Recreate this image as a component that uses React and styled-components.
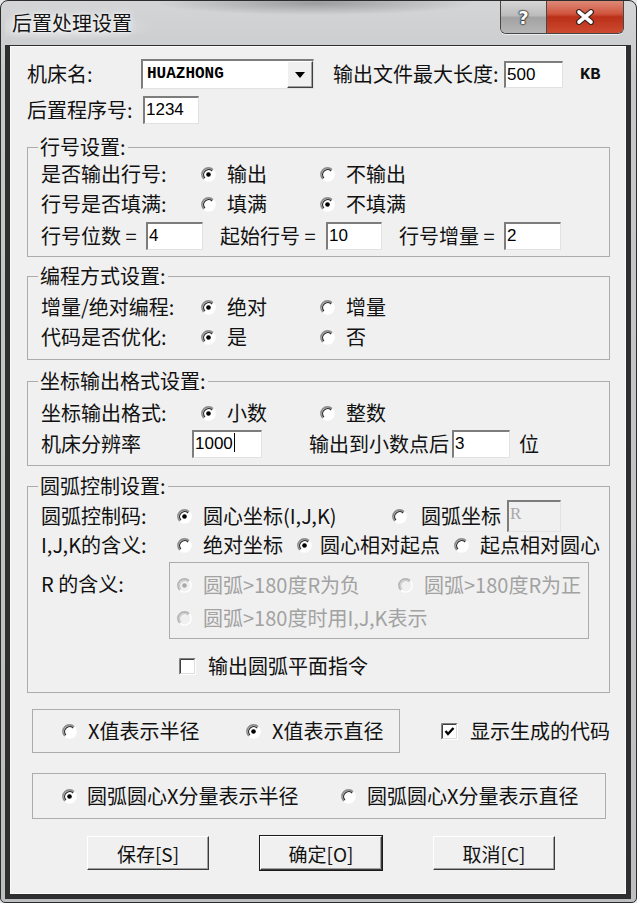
import React from 'react';
import styled, { createGlobalStyle } from 'styled-components';

const font = `"Noto Sans CJK SC", "Noto Sans CJK TC", sans-serif`;

const GlobalStyle = createGlobalStyle`
  html, body { margin: 0; padding: 0; background: #e6e7e8; }
  body { font-family: ${font}; }
`;

const Window = styled.div`
  box-sizing: border-box;
  width: 637px;
  height: 903px;
  border: 1px solid #2c2c2c;
  border-radius: 8px 8px 5px 5px;
  background: linear-gradient(#d3d5d7, #c6c8ca 80px, #bcbec0);
  padding: 0 5px 3px 4px;
  display: flex;
  flex-direction: column;
  overflow: hidden;
  font-family: ${font};
  color: #111;
`;

const TitleBar = styled.div`
  height: 44px;
  flex-shrink: 0;
  display: flex;
  align-items: flex-start;
  background:
    radial-gradient(ellipse 160px 12px at 310px 2px, rgba(70, 70, 70, 0.4), transparent),
    radial-gradient(ellipse 90px 14px at 60px 26px, rgba(255, 255, 255, 0.5), transparent);
`;

const TitleText = styled.div`
  font-size: 20px;
  line-height: 44px;
  padding-left: 7px;
  color: #151515;
  text-shadow: 0 0 8px rgba(255, 255, 255, 0.95), 0 0 3px rgba(255, 255, 255, 0.9);
`;

const TitleButtons = styled.div`
  margin-left: auto;
  margin-right: 7px;
  display: flex;
  border: 1px solid #474747;
  border-top: none;
  border-radius: 0 0 6px 6px;
  box-shadow: 0 1px 0 rgba(255, 255, 255, 0.6);
`;

const HelpButton = styled.div`
  width: 45px;
  height: 32px;
  display: flex;
  align-items: center;
  justify-content: center;
  border-right: 1px solid #474747;
  border-bottom-left-radius: 5px;
  background: linear-gradient(#d6d6d6, #bcbcbc 45%, #a2a2a2 52%, #b6b6b6);
`;

const CloseButton = styled.div`
  width: 76px;
  height: 32px;
  display: flex;
  align-items: center;
  justify-content: center;
  border-bottom-right-radius: 5px;
  background: #c5402a;
  background: linear-gradient(#dd8a78, #d0553e 40%, #bb3019 50%, #cc4a30);
`;

const HelpGlyph = styled.span`
  font-family: "DejaVu Sans", sans-serif;
  font-weight: bold;
  font-size: 18px;
  color: #fff;
  text-shadow: 0 0 1px #222, 0 0 1px #222, 0 0 2px #222, 0 0 2px #222;
`;

const Frame = styled.div`
  flex: 1;
  display: flex;
  background: #2f2f2f;
  padding: 1px 6px 5px 5px;
`;

const Client = styled.div`
  flex: 1;
  box-sizing: border-box;
  background: #f0f0f0;
  border: 1px solid #fbfbfb;
  padding: 11px 15px 0 16px;
  display: flex;
  flex-direction: column;
  font-size: 20px;
`;

const Row = styled.div`
  display: flex;
  align-items: center;
  height: ${p => p.h || 30}px;
  margin-top: ${p => p.mt || 0}px;
  padding-left: ${p => p.pl || 0}px;
  flex-shrink: 0;
`;

const Label = styled.span`
  display: inline-block;
  width: ${p => (p.w ? `${p.w}px` : 'auto')};
  margin-left: ${p => p.ml || 0}px;
  margin-top: ${p => p.mt || 0}px;
  flex-shrink: 0;
  white-space: nowrap;
  line-height: 24px;
  color: #111;
`;

const Field = styled.div`
  box-sizing: border-box;
  flex-shrink: 0;
  width: ${p => p.w}px;
  height: ${p => p.h || 28}px;
  background: ${p => (p.$off ? '#f0f0f0' : '#fff')};
  border-top: 2px solid #7d7d7d;
  border-left: 2px solid #7d7d7d;
  border-right: 1px solid #e2e2e2;
  border-bottom: 1px solid #e2e2e2;
  padding: 1px 0 0 1px;
  font-family: ${p => (p.$off ? '"Liberation Serif", serif' : '"Liberation Sans", sans-serif')};
  font-size: 17px;
  line-height: 21px;
  color: ${p => (p.$off ? '#a8a8a8' : '#000')};
  display: flex;
  align-items: flex-start;
`;

const Caret = styled.span`
  width: 1px;
  height: 19px;
  background: #000;
  margin-left: 1px;
`;

const Combo = styled(Field)`
  align-items: center;
  padding: 0;
  justify-content: space-between;
`;

const ComboText = styled.span`
  font-family: "Liberation Mono", monospace;
  font-weight: bold;
  font-size: 16px;
  padding-left: 4px;
`;

const DropButton = styled.div`
  box-sizing: border-box;
  width: 26px;
  height: 100%;
  background: #f0f0f0;
  border-top: 1px solid #fff;
  border-left: 1px solid #fff;
  border-right: 1px solid #404040;
  border-bottom: 1px solid #404040;
  box-shadow: inset -1px -1px 0 #a0a0a0;
  display: flex;
  align-items: center;
  justify-content: center;
`;

const Unit = styled.span`
  font-family: "Liberation Mono", monospace;
  font-weight: bold;
  font-size: 17px;
  margin-left: ${p => p.ml || 0}px;
`;

const Group = styled.fieldset`
  margin: ${p => p.mt || 0}px 0 0 0;
  padding: ${p => p.pt || 0}px 0 ${p => p.pb || 0}px 13px;
  border: 1px solid #acacac;
  min-width: 0;
  flex-shrink: 0;
`;

const GroupTitle = styled.legend`
  font-size: 20px;
  line-height: 22px;
  padding: 0 2px;
  margin-left: -3px;
`;

const Panel = styled.div`
  box-sizing: border-box;
  width: ${p => p.w}px;
  height: ${p => p.h}px;
  margin-left: ${p => p.ml || 0}px;
  margin-top: ${p => p.mt || 0}px;
  padding-left: ${p => p.pl || 0}px;
  border: 1px solid #acacac;
  display: flex;
  align-items: center;
  flex-shrink: 0;
`;

const SubFrame = styled.div`
  box-sizing: border-box;
  width: 420px;
  height: 77px;
  border: 1px solid #acacac;
  padding: 10px 0 0 7px;
  display: flex;
  flex-direction: column;
  gap: 9px;
`;

const SubRow = styled.div`
  display: flex;
  align-items: center;
  height: 24px;
`;

const OptionWrap = styled.label`
  display: inline-flex;
  align-items: center;
  width: ${p => (p.w ? `${p.w}px` : 'auto')};
  margin-left: ${p => p.ml || 0}px;
  flex-shrink: 0;
  white-space: nowrap;
  gap: ${p => p.gap || 11}px;
  line-height: 24px;
  color: ${p => (p.$off ? '#a2a2a2' : '#111')};
`;

const SectionRow = styled.div`
  display: flex;
  align-items: flex-start;
  margin-top: 4px;
`;

const ButtonRow = styled.div`
  display: flex;
  gap: 51px;
  margin-top: 17px;
  padding-left: 60px;
`;

const PushButton = styled.div`
  box-sizing: border-box;
  width: 122px;
  height: 34px;
  display: flex;
  align-items: center;
  justify-content: center;
  background: #f0f0f0;
  border-top: 1px solid #fff;
  border-left: 1px solid #fff;
  border-right: 1px solid #3a3a3a;
  border-bottom: 1px solid #3a3a3a;
  box-shadow: inset -1px -1px 0 #a0a0a0${p => (p.$primary ? ', 0 0 0 1px #1a1a1a' : '')};
  font-size: 19px;
`;

const RadioMark = ({ checked, disabled }) => (
  <svg width="15" height="15" viewBox="0 0 15 15" style={{ flexShrink: 0 }}>
    <circle cx="7.5" cy="7.5" r="6.6" fill={disabled ? '#f0f0f0' : '#fff'} />
    <path d="M2.83 12.17 A6.6 6.6 0 0 1 12.17 2.83" stroke={disabled ? '#b4b4b4' : '#8c8c8c'} strokeWidth="1.6" fill="none" />
    <path d="M3.9 11.1 A5.1 5.1 0 0 1 11.1 3.9" stroke={disabled ? '#c8c8c8' : '#2e2e2e'} strokeWidth="1.3" fill="none" />
    <path d="M12.17 2.83 A6.6 6.6 0 0 1 2.83 12.17" stroke="#fff" strokeWidth="1.4" fill="none" />
    {checked && <circle cx="7.5" cy="7.5" r="2.3" fill={disabled ? '#a8a8a8' : '#000'} />}
  </svg>
);

const CheckMark = ({ checked }) => (
  <svg width="17" height="17" viewBox="0 0 17 17" style={{ flexShrink: 0 }}>
    <rect x="0" y="0" width="17" height="17" fill="#fff" />
    <path d="M0.5 16.5 V0.5 H16.5" stroke="#808080" fill="none" />
    <path d="M1.5 15.5 V1.5 H15.5" stroke="#404040" fill="none" />
    <path d="M16.5 0.5 V16.5 H0.5" stroke="#fff" fill="none" />
    <path d="M15.5 1.5 V15.5 H1.5" stroke="#dcdcdc" fill="none" />
    {checked && <path d="M4.5 8 L7 11 L12.5 5" stroke="#000" strokeWidth="2.4" fill="none" />}
  </svg>
);

const Radio = ({ checked, disabled, w, ml, gap, children }) => (
  <OptionWrap w={w} ml={ml} gap={gap} $off={disabled}>
    <RadioMark checked={checked} disabled={disabled} />
    {children}
  </OptionWrap>
);

const Check = ({ checked, w, ml, children }) => (
  <OptionWrap w={w} ml={ml} gap={12}>
    <CheckMark checked={checked} />
    {children}
  </OptionWrap>
);

export default function App() {
  return (
    <>
      <GlobalStyle />
      <Window>
        <TitleBar>
          <TitleText>后置处理设置</TitleText>
          <TitleButtons>
            <HelpButton><HelpGlyph>?</HelpGlyph></HelpButton>
            <CloseButton>
              <svg width="20" height="16" viewBox="0 0 20 16">
                <path d="M4 3 L16 13 M16 3 L4 13" stroke="#3a2220" strokeWidth="6" strokeLinecap="round" />
                <path d="M4 3 L16 13 M16 3 L4 13" stroke="#fff" strokeWidth="3.6" strokeLinecap="round" />
              </svg>
            </CloseButton>
          </TitleButtons>
        </TitleBar>
        <Frame>
          <Client>
            <Row h={32}>
              <Label w={114}>机床名:</Label>
              <Combo w={173} h={30}>
                <ComboText>HUAZHONG</ComboText>
                <DropButton>
                  <svg width="10" height="6" viewBox="0 0 10 6"><path d="M0 0 H10 L5 6 Z" fill="#000" /></svg>
                </DropButton>
              </Combo>
              <Label w={171} ml={19}>输出文件最大长度:</Label>
              <Field w={59} h={27}>500</Field>
              <Unit ml={17}>KB</Unit>
            </Row>
            <Row h={32} mt={4}>
              <Label w={116}>后置程序号:</Label>
              <Field w={56} h={28}>1234</Field>
            </Row>

            <Group mt={10} pt={1} pb={3}>
              <GroupTitle>行号设置:</GroupTitle>
              <Row>
                <Label w={160}>是否输出行号:</Label>
                <Radio checked w={119}>输出</Radio>
                <Radio>不输出</Radio>
              </Row>
              <Row>
                <Label w={160}>行号是否填满:</Label>
                <Radio w={119}>填满</Radio>
                <Radio checked>不填满</Radio>
              </Row>
              <Row h={34}>
                <Label w={105}>行号位数 =</Label>
                <Field w={57}>4</Field>
                <Label w={106} ml={17}>起始行号 =</Label>
                <Field w={56}>10</Field>
                <Label w={105} ml={17}>行号增量 =</Label>
                <Field w={57}>2</Field>
              </Row>
            </Group>

            <Group mt={8} pt={5} pb={7}>
              <GroupTitle>编程方式设置:</GroupTitle>
              <Row>
                <Label w={160}>增量/绝对编程:</Label>
                <Radio checked w={119}>绝对</Radio>
                <Radio>增量</Radio>
              </Row>
              <Row>
                <Label w={160}>代码是否优化:</Label>
                <Radio checked w={119}>是</Radio>
                <Radio>否</Radio>
              </Row>
            </Group>

            <Group mt={10} pt={6} pb={5}>
              <GroupTitle>坐标输出格式设置:</GroupTitle>
              <Row>
                <Label w={160}>坐标输出格式:</Label>
                <Radio checked w={119}>小数</Radio>
                <Radio>整数</Radio>
              </Row>
              <Row h={32}>
                <Label w={151}>机床分辨率</Label>
                <Field w={70}>1000<Caret /></Field>
                <Label w={143} ml={47}>输出到小数点后</Label>
                <Field w={58}>3</Field>
                <Label ml={9}>位</Label>
              </Row>
            </Group>

            <Group mt={9} pt={3} pb={11}>
              <GroupTitle>圆弧控制设置:</GroupTitle>
              <Row h={32}>
                <Label w={136}>圆弧控制码:</Label>
                <Radio checked w={215}>圆心坐标(I,J,K)</Radio>
                <Radio w={115} gap={14}>圆弧坐标</Radio>
                <Field w={54} h={32} $off>R</Field>
              </Row>
              <Row h={26}>
                <Label w={136}>I,J,K的含义:</Label>
                <Radio w={120}>绝对坐标</Radio>
                <Radio checked w={157} gap={8}>圆心相对起点</Radio>
                <Radio>起点相对圆心</Radio>
              </Row>
              <SectionRow>
                <Label w={128} mt={10}>R 的含义:</Label>
                <SubFrame>
                  <SubRow>
                    <Radio checked disabled w={221}>圆弧&gt;180度R为负</Radio>
                    <Radio disabled>圆弧&gt;180度R为正</Radio>
                  </SubRow>
                  <SubRow>
                    <Radio disabled>圆弧&gt;180度时用I,J,K表示</Radio>
                  </SubRow>
                </SubFrame>
              </SectionRow>
              <Row mt={12} pl={138}>
                <Check>输出圆弧平面指令</Check>
              </Row>
            </Group>

            <Row h={44} mt={16}>
              <Panel w={368} h={44} ml={5} pl={29}>
                <Radio w={184}>X值表示半径</Radio>
                <Radio checked>X值表示直径</Radio>
              </Panel>
              <Check checked ml={41}>显示生成的代码</Check>
            </Row>

            <Panel w={574} h={46} ml={5} mt={20} pl={29}>
              <Radio checked w={279} gap={10}>圆弧圆心X分量表示半径</Radio>
              <Radio>圆弧圆心X分量表示直径</Radio>
            </Panel>

            <ButtonRow>
              <PushButton>保存[S]</PushButton>
              <PushButton $primary>确定[O]</PushButton>
              <PushButton>取消[C]</PushButton>
            </ButtonRow>
          </Client>
        </Frame>
      </Window>
    </>
  );
}
